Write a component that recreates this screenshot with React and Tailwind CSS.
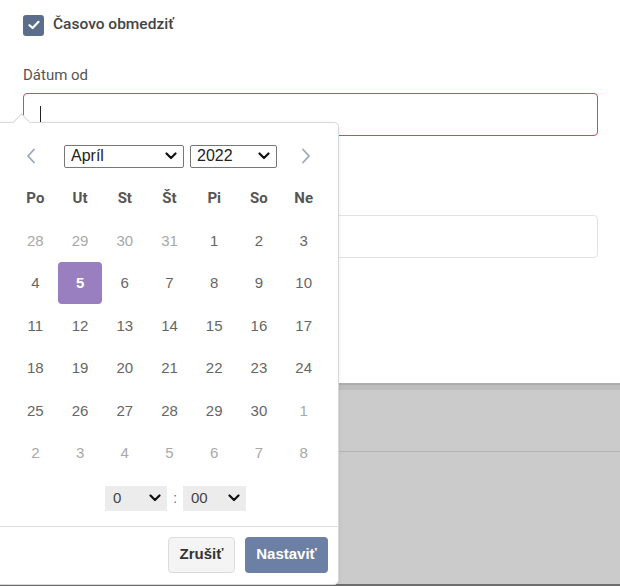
import React from "react";

const Chevron = ({ className = "" }) => (
  <svg width="12" height="8" viewBox="0 0 12 8" className={className}>
    <path d="M1.5 1.5 L6 6 L10.5 1.5" fill="none" stroke="#111" strokeWidth="2.2" strokeLinecap="round" strokeLinejoin="round" />
  </svg>
);

const weeks = [
  [[28, 1], [29, 1], [30, 1], [31, 1], [1, 0], [2, 0], [3, 0]],
  [[4, 0], [5, 2], [6, 0], [7, 0], [8, 0], [9, 0], [10, 0]],
  [[11, 0], [12, 0], [13, 0], [14, 0], [15, 0], [16, 0], [17, 0]],
  [[18, 0], [19, 0], [20, 0], [21, 0], [22, 0], [23, 0], [24, 0]],
  [[25, 0], [26, 0], [27, 0], [28, 0], [29, 0], [30, 0], [1, 1]],
  [[2, 1], [3, 1], [4, 1], [5, 1], [6, 1], [7, 1], [8, 1]],
];

const days = ["Po", "Ut", "St", "Št", "Pi", "So", "Ne"];

export default function App() {
  return (
    <div className="relative w-[620px] h-[586px] overflow-hidden bg-white" style={{ fontFamily: "Roboto, 'Liberation Sans', sans-serif" }}>
      {/* Form area */}
      <div className="h-[383px] bg-white pl-[23px] pr-[22px] pt-[14px]">
        <div className="flex items-center gap-[9px] h-[22px]">
          <div className="w-[21px] h-[21px] rounded-[3px] bg-[#5a6d8b] flex items-center justify-center">
            <svg width="12" height="10" viewBox="0 0 12 10">
              <path d="M1.5 5.2 L4.6 8 L10.5 1.8" fill="none" stroke="white" strokeWidth="2.2" strokeLinecap="round" strokeLinejoin="round" />
            </svg>
          </div>
          <span className="text-[15.5px] font-medium text-[#444]">Časovo obmedziť</span>
        </div>
        <div className="mt-[30px] text-[15px] text-[#555] leading-[18px]">Dátum od</div>
        <div className="mt-[9px] h-[43px] border border-[#cf4a5b] rounded-[4px] flex items-center pl-[16px]">
          <div className="w-px h-[17px] bg-[#222]" />
        </div>
        <div className="h-[79px]" />
        <div className="h-[43px] border border-[#e3e3e3] rounded-[4px]" />
      </div>
      {/* Gray backdrop */}
      <div className="h-[203px] bg-[#cbcbcb] flex flex-col">
        <div className="h-[2px] bg-[#adadad]" />
        <div className="h-[5px] bg-[#bdbdbd]" />
        <div className="h-[61px]" />
        <div className="h-px bg-[#b4b4b4]" />
        <div className="flex-1" />
        <div className="h-[2px] bg-[#6e6e6e]" />
      </div>

      {/* Datepicker popup */}
      <div className="absolute left-[-4px] top-[122px] w-[343px] h-[463px] bg-white border border-[#d8d8d8] rounded-[5px] shadow-[0_1px_4px_rgba(0,0,0,0.08)]">
        <div className="absolute left-[18px] top-[-7px] w-[13px] h-[13px] bg-white border-l border-t border-[#d8d8d8] rotate-45" />
        <div className="relative pl-[4px]">
          {/* header */}
          <div className="flex items-center h-[44px] pt-[22px]">
            <div className="w-[63px] flex justify-center">
              <svg width="10" height="16" viewBox="0 0 10 16" className="ml-[-3px]">
                <path d="M8 1.5 L2 8 L8 14.5" fill="none" stroke="#9aa6ba" strokeWidth="1.8" strokeLinecap="round" strokeLinejoin="round" />
              </svg>
            </div>
            <div className="w-[120px] h-[23px] border border-[#777] rounded-[2px] flex items-center justify-between pl-[6px] pr-[6px] text-[16px] text-[#222]" style={{ fontFamily: "'Liberation Sans', Arial, sans-serif" }}>
              <span>Apríl</span>
              <Chevron />
            </div>
            <div className="w-[87px] h-[23px] ml-[6px] border border-[#777] rounded-[2px] flex items-center justify-between pl-[6px] pr-[6px] text-[16px] text-[#222]" style={{ fontFamily: "'Liberation Sans', Arial, sans-serif" }}>
              <span>2022</span>
              <Chevron />
            </div>
            <div className="flex-1 flex justify-center pr-[6px]">
              <svg width="10" height="16" viewBox="0 0 10 16" className="ml-[2px]">
                <path d="M2 1.5 L8 8 L2 14.5" fill="none" stroke="#9aa6ba" strokeWidth="1.8" strokeLinecap="round" strokeLinejoin="round" />
              </svg>
            </div>
          </div>
          {/* grid */}
          <div className="ml-[12px] w-[313px] mt-[10px]">
            <div className="grid grid-cols-7 h-[42.5px] items-center">
              {days.map((d) => (
                <div key={d} className="text-center text-[15px] font-bold text-[#555]">{d}</div>
              ))}
            </div>
            {weeks.map((w, i) => (
              <div key={i} className="grid grid-cols-7 h-[42.5px]">
                {w.map(([n, t], j) => (
                  <div key={j} className="flex items-center justify-center">
                    {t === 2 ? (
                      <div className="w-[44px] h-[42px] rounded-[4px] bg-[#9a7fc0] flex items-center justify-center text-white text-[15px] font-bold" style={{ fontFamily: "'Liberation Sans', Arial, sans-serif" }}>{n}</div>
                    ) : (
                      <span className={`text-[15px] ${t === 1 ? "text-[#a8a8a8]" : "text-[#666]"}`} style={{ fontFamily: "'Liberation Sans', Arial, sans-serif" }}>{n}</span>
                    )}
                  </div>
                ))}
              </div>
            ))}
          </div>
          {/* time */}
          <div className="flex items-center pl-[104px] mt-[11px] h-[25px] text-[15px] text-[#444]" style={{ fontFamily: "'Liberation Sans', Arial, sans-serif" }}>
            <div className="w-[62px] h-[25px] bg-[#ececec] flex items-center justify-between pl-[8px] pr-[6px]">
              <span>0</span>
              <Chevron />
            </div>
            <span className="w-[16px] text-center text-[#777]">:</span>
            <div className="w-[63px] h-[25px] bg-[#ececec] flex items-center justify-between pl-[8px] pr-[6px]">
              <span>00</span>
              <Chevron />
            </div>
          </div>
          <div className="mt-[15px] border-t border-[#dedede] ml-[-4px]" />
          <div className="flex justify-end gap-[10px] pr-[10px] pt-[10px]" style={{ fontFamily: "'Liberation Sans', Arial, sans-serif" }}>
            <div className="w-[67px] h-[36px] bg-[#f4f4f4] border border-[#dcdcdc] rounded-[4px] flex items-center justify-center text-[15px] font-bold text-[#333]">Zrušiť</div>
            <div className="w-[83px] h-[36px] bg-[#6b80a4] rounded-[4px] flex items-center justify-center text-[15px] font-bold text-white">Nastaviť</div>
          </div>
        </div>
      </div>
    </div>
  );
}
